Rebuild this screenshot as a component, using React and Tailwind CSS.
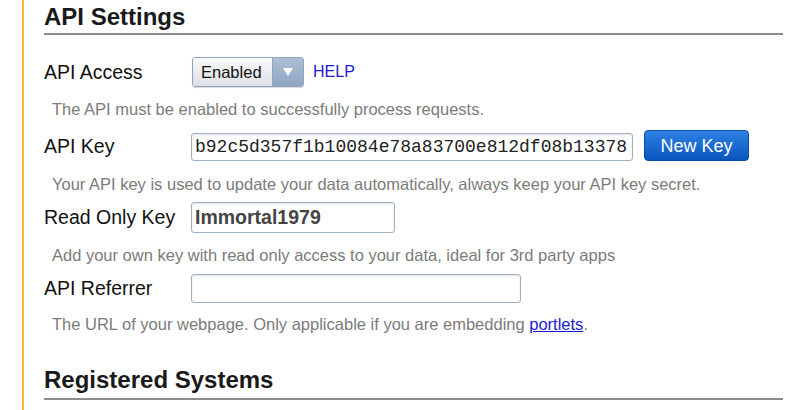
export default function App() {
  const sans = { fontFamily: '"Liberation Sans", Arial, sans-serif' };
  return (
    <div className="w-[800px] h-[410px] bg-white overflow-hidden pl-[22px]" style={sans}>
      <div className="h-full border-l-2 border-[#f6b83c] pl-[20px] pr-[17px]">
        <h2 className="text-[24px] font-bold leading-[28px] pt-[3px] pb-[2px] border-b-2 border-[#8d8d8d] text-[#1a1a1a]">
          API Settings
        </h2>

        <div className="mt-[22px] flex items-center h-[30px]">
          <div className="w-[148px] text-[19.5px] leading-[30px] text-[#111]">API Access</div>
          <div className="flex h-[30px] w-[112px] rounded-[3px] border border-[#8fa3bd] overflow-hidden shadow-[0_1px_1px_rgba(0,0,0,0.15)]">
            <div className="flex-1 flex items-center pl-[8px] text-[16.5px] text-[#111] bg-gradient-to-b from-[#fbfbfb] to-[#dcdfe3]">
              Enabled
            </div>
            <div className="w-[31px] flex items-center justify-center bg-gradient-to-b from-[#aebfd4] to-[#8ea5c2] border-l border-[#8fa3bd]">
              <svg width="12" height="10" viewBox="0 0 12 10">
                <path d="M1 1 L11 1 L6 9 Z" fill="#ffffff" />
              </svg>
            </div>
          </div>
          <a className="ml-[9px] text-[16px] text-[#1a1ad0]">HELP</a>
        </div>
        <p className="mt-[12px] pl-[8px] text-[16.5px] leading-[20px] text-[#7b7b7b]">
          The API must be enabled to successfully process requests.
        </p>

        <div className="mt-[11px] flex items-end h-[31px]">
          <div className="w-[147px] text-[19.5px] leading-[30px] text-[#111]">API Key</div>
          <div
            className="h-[28px] w-[442px] rounded-[3px] border border-[#9db0c8] bg-white flex items-center pl-[3px] text-[18px] text-[#222] shadow-[inset_0_1px_2px_rgba(0,0,0,0.12)]"
            style={{ fontFamily: '"Liberation Mono", "Courier New", monospace' }}
          >
            b92c5d357f1b10084e78a83700e812df08b13378
          </div>
          <button className="ml-[11px] h-[31px] w-[105px] rounded-[4px] border border-[#0b4aa6] bg-gradient-to-b from-[#2c82e2] to-[#0a55bd] text-white text-[18px] leading-none flex items-center justify-center">
            New Key
          </button>
        </div>
        <p className="mt-[13px] pl-[8px] text-[16.5px] leading-[20px] text-[#7b7b7b]">
          Your API key is used to update your data automatically, always keep your API key secret.
        </p>

        <div className="mt-[8px] flex items-center h-[31px]">
          <div className="w-[147px] text-[19.5px] leading-[31px] text-[#111]">Read Only Key</div>
          <div className="h-[31px] w-[204px] rounded-[3px] border border-[#9db0c8] bg-white flex items-center pl-[3px] text-[19.5px] font-bold text-[#444] shadow-[inset_0_1px_2px_rgba(0,0,0,0.12)]">
            Immortal1979
          </div>
        </div>
        <p className="mt-[12px] pl-[8px] text-[16.5px] leading-[20px] text-[#7b7b7b]">
          Add your own key with read only access to your data, ideal for 3rd party apps
        </p>

        <div className="mt-[9px] flex items-center h-[29px]">
          <div className="w-[147px] text-[19.5px] leading-[29px] text-[#111]">API Referrer</div>
          <div className="h-[29px] w-[330px] rounded-[3px] border border-[#9db0c8] bg-white shadow-[inset_0_1px_2px_rgba(0,0,0,0.12)]"></div>
        </div>
        <p className="mt-[11px] pl-[8px] text-[16.5px] leading-[20px] text-[#7b7b7b]">
          The URL of your webpage. Only applicable if you are embedding{" "}
          <a className="text-[#1a1ad0] underline">portlets</a>.
        </p>

        <h2 className="mt-[32px] text-[24px] font-bold leading-[28px] pb-[4px] border-b-2 border-[#8d8d8d] text-[#1a1a1a]">
          Registered Systems
        </h2>
      </div>
    </div>
  );
}
